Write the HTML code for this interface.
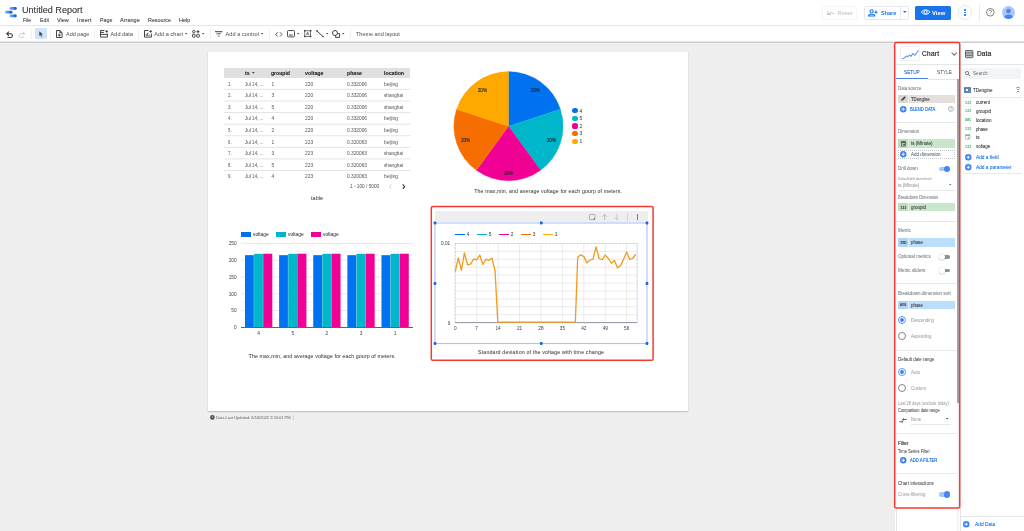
<!DOCTYPE html>
<html>
<head>
<meta charset="utf-8">
<title>Untitled Report</title>
<style>
*{box-sizing:border-box;margin:0;padding:0}
html,body{width:1024px;height:531px;overflow:hidden;background:#eeeeee;font-family:"Liberation Sans",sans-serif;color:#3c4043}
.a{position:absolute}
.t{position:absolute;white-space:nowrap;transform-origin:0 0;text-shadow:0 0 0.5px color-mix(in srgb,currentColor 45%,transparent)}
svg{position:absolute;overflow:visible}
#root{position:absolute;left:0;top:0;width:1024px;height:531px;will-change:transform}
</style>
</head>
<body>
<div id="root">
<div class="a" style="left:0.00px;top:0.00px;width:1024.00px;height:25.40px;background:#fff;"></div>
<div class="a" style="left:0.00px;top:25.40px;width:1024.00px;height:0.70px;background:#e4e6e8;"></div>
<div class="a" style="left:0.00px;top:26.10px;width:1024.00px;height:16.00px;background:#fff;"></div>
<div class="a" style="left:0.00px;top:41.00px;width:1024.00px;height:2.40px;background:linear-gradient(#ffffff 0%,#dedede 30%,#c3c3c3 55%,#cfcfcf 75%,#eeeeee 100%)"></div>
<svg style="left:5.40px;top:7.40px" width="12" height="10.6" viewBox="0 0 12 10.6"><defs><linearGradient id="lg" x1="0" x2="1" y1="0" y2="0"><stop offset="0" stop-color="#7fb0f9"/><stop offset="0.55" stop-color="#4285f4"/><stop offset="1" stop-color="#1967d2"/></linearGradient></defs><rect x="4.5" y="0.1" width="7.1" height="2.75" rx="1.37" fill="url(#lg)"/><rect x="0.1" y="3.85" width="7.3" height="2.75" rx="1.37" fill="url(#lg)"/><rect x="4.5" y="7.6" width="7.1" height="2.75" rx="1.37" fill="url(#lg)"/><circle cx="10.2" cy="1.47" r="1.37" fill="#1a6ae0"/><circle cx="6" cy="5.22" r="1.37" fill="#1a6ae0"/><circle cx="10.2" cy="8.97" r="1.37" fill="#1a6ae0"/></svg>
<div class="t" style="left:22.40px;top:4px;font-size:9.40px;color:#3c4043;line-height:11px;transform:scaleX(0.9697);">Untitled Report</div>
<div class="t" style="left:23.10px;top:17px;font-size:5.60px;color:#45494d;line-height:6px;transform:scaleX(0.8977);">File</div>
<div class="t" style="left:39.80px;top:17px;font-size:5.60px;color:#45494d;line-height:6px;transform:scaleX(0.9327);">Edit</div>
<div class="t" style="left:57.00px;top:17px;font-size:5.60px;color:#45494d;line-height:6px;transform:scaleX(0.9803);">View</div>
<div class="t" style="left:77.00px;top:17px;font-size:5.60px;color:#45494d;line-height:6px;letter-spacing:0.082px;">Insert</div>
<div class="t" style="left:99.60px;top:17px;font-size:5.60px;color:#45494d;line-height:6px;transform:scaleX(0.9481);">Page</div>
<div class="t" style="left:120.20px;top:17px;font-size:5.60px;color:#45494d;line-height:6px;transform:scaleX(0.9938);">Arrange</div>
<div class="t" style="left:148.00px;top:17px;font-size:5.60px;color:#45494d;line-height:6px;transform:scaleX(0.9597);">Resource</div>
<div class="t" style="left:179.00px;top:17px;font-size:5.60px;color:#45494d;line-height:6px;transform:scaleX(0.9811);">Help</div>
<div class="a" style="left:822.00px;top:5.50px;width:35.00px;height:14.00px;background:#fff;border:0.5px solid #f4f5f6;border-radius:1.6px"></div>
<svg style="left:827.00px;top:9.50px" width="8" height="6" viewBox="0 0 8 6"><path d="M0.8 1.2 V4.6 H4 M1 4.4 C2.2 2.6 5 2 7.6 4.2" fill="none" stroke="#bcbfc3" stroke-width="1.0"/></svg>
<div class="t" style="left:837.60px;top:10px;font-size:5.60px;color:#c4c7ca;line-height:6px;letter-spacing:0.074px;">Reset</div>
<div class="a" style="left:863.50px;top:5.50px;width:45.00px;height:14.00px;background:#fff;border:0.6px solid #e6e8eb;border-radius:1.6px"></div>
<div class="a" style="left:899.80px;top:5.80px;width:0.60px;height:13.40px;background:#e6e8eb;"></div>
<svg style="left:868.00px;top:8.60px" width="10" height="8" viewBox="0 0 10 8"><g fill="none" stroke="#1a73e8" stroke-width="1.05"><circle cx="3.6" cy="2.3" r="1.6"/><path d="M0.5 7 C0.5 4.6 6.7 4.6 6.7 7 Z"/><path d="M8 1.6 V4.8 M6.4 3.2 H9.6"/></g></svg>
<div class="t" style="left:881.00px;top:10px;font-size:5.60px;color:#1a73e8;line-height:6px;transform:scaleX(0.9766);font-weight:bold;text-shadow:none;">Share</div>
<svg style="left:902.60px;top:11.40px" width="3.6" height="2" viewBox="0 0 3.6 2"><path d="M0 0 H3.6 L1.8 2 Z" fill="#1a73e8"/></svg>
<div class="a" style="left:915.00px;top:5.50px;width:36.00px;height:14.00px;background:#1a73e8;border-radius:1.6px"></div>
<svg style="left:921.00px;top:9.40px" width="9.2" height="6.2" viewBox="0 0 9.2 6.2"><g fill="none" stroke="#fff" stroke-width="0.95"><path d="M0.4 3.1 C2 0.2 7.2 0.2 8.8 3.1 C7.2 6 2 6 0.4 3.1 Z"/><circle cx="4.6" cy="3.1" r="1.6"/></g></svg>
<div class="t" style="left:932.00px;top:10px;font-size:5.80px;color:#fff;line-height:6px;letter-spacing:0.022px;font-weight:bold;text-shadow:none;">View</div>
<div class="a" style="left:957.60px;top:5.20px;width:14.80px;height:14.80px;background:#fff;border:0.6px solid #e6e8eb;border-radius:50%"></div>
<div class="a" style="left:964.30px;top:9.15px;width:1.50px;height:1.50px;background:#1a73e8;border-radius:50%"></div>
<div class="a" style="left:964.30px;top:11.75px;width:1.50px;height:1.50px;background:#1a73e8;border-radius:50%"></div>
<div class="a" style="left:964.30px;top:14.35px;width:1.50px;height:1.50px;background:#1a73e8;border-radius:50%"></div>
<div class="a" style="left:979.30px;top:4.00px;width:0.60px;height:17.20px;background:#e9ebed;"></div>
<svg style="left:986.20px;top:8.20px" width="8.6" height="8.6" viewBox="0 0 8.6 8.6"><circle cx="4.3" cy="4.3" r="3.8" fill="none" stroke="#5f6368" stroke-width="0.8"/><path d="M3.1 3.4 C3.1 1.7 5.6 1.7 5.6 3.4 C5.6 4.3 4.3 4.4 4.3 5.3" fill="none" stroke="#5f6368" stroke-width="0.75"/><circle cx="4.3" cy="6.4" r="0.45" fill="#5f6368"/></svg>
<svg style="left:1001.50px;top:6.00px" width="13" height="13" viewBox="0 0 13 13"><defs><clipPath id="av"><circle cx="6.5" cy="6.5" r="6.5"/></clipPath></defs><circle cx="6.5" cy="6.5" r="6.5" fill="#a8c7fa"/><g clip-path="url(#av)" fill="#4a86e8"><circle cx="6.5" cy="5" r="2.3"/><path d="M2 11.3 C2 7.6 11 7.6 11 11.3 V13 H2 Z"/></g></svg>
<svg style="left:6.00px;top:30.60px" width="7.5" height="7" viewBox="0 0 7.5 7"><path d="M2.9 0.6 L0.8 2.7 L2.9 4.8 M1 2.7 H4.6 A1.85 1.85 0 0 1 4.6 6.4 H1.4" fill="none" stroke="#33373b" stroke-width="1.05"/></svg>
<svg style="left:18.20px;top:30.60px" width="7.5" height="7" viewBox="0 0 7.5 7"><path d="M4.6 0.6 L6.7 2.7 L4.6 4.8 M6.5 2.7 H2.9 A1.85 1.85 0 0 0 2.9 6.4 H6.1" fill="none" stroke="#c4c7ca" stroke-width="0.85"/></svg>
<div class="a" style="left:31.20px;top:29.20px;width:0.50px;height:9.80px;background:#eff0f2;"></div>
<div class="a" style="left:34.80px;top:27.80px;width:12.20px;height:11.40px;background:#d2e3fc;border-radius:1px"></div>
<svg style="left:39.00px;top:31.00px" width="4.4" height="6" viewBox="0 0 4.4 6"><path d="M0.3 0.2 V5 L1.5 3.9 L2.4 5.9 L3.2 5.5 L2.3 3.6 H3.9 Z" fill="#3c4043"/></svg>
<div class="a" style="left:50.20px;top:29.20px;width:0.50px;height:9.80px;background:#eff0f2;"></div>
<svg style="left:56.00px;top:30.00px" width="6.6" height="8" viewBox="0 0 6.6 8"><path d="M0.5 0.5 H4 L6.1 2.6 V7.5 H0.5 Z M3.9 0.6 V2.7 H6" fill="none" stroke="#3c4043" stroke-width="0.98"/><path d="M3.3 3.6 V6.6 M1.8 5.1 H4.8" stroke="#3c4043" stroke-width="0.98"/></svg>
<div class="t" style="left:65.90px;top:31px;font-size:5.50px;color:#6a6e73;line-height:6px;transform:scaleX(0.9894);">Add page</div>
<div class="a" style="left:94.40px;top:29.20px;width:0.50px;height:9.80px;background:#eff0f2;"></div>
<svg style="left:100.00px;top:30.20px" width="8.2" height="7.6" viewBox="0 0 8.2 7.6"><path d="M4.4 0.5 H0.5 V7.1 H7.4 V3.6 M0.5 4.4 H7.4 M0.5 2.4 H4" fill="none" stroke="#3c4043" stroke-width="0.98"/><path d="M6.7 0 V2.8 M5.3 1.4 H8.1" stroke="#3c4043" stroke-width="0.9"/></svg>
<div class="t" style="left:110.60px;top:31px;font-size:5.50px;color:#6a6e73;line-height:6px;letter-spacing:0.048px;">Add data</div>
<div class="a" style="left:138.40px;top:29.20px;width:0.50px;height:9.80px;background:#eff0f2;"></div>
<svg style="left:144.00px;top:30.20px" width="8.2" height="7.6" viewBox="0 0 8.2 7.6"><path d="M4.4 0.5 H0.5 V7.1 H7.4 V3.6" fill="none" stroke="#3c4043" stroke-width="0.98"/><path d="M2.2 5.8 V4.2 M3.7 5.8 V2.8 M5.2 5.8 V4.8" stroke="#3c4043" stroke-width="0.98"/><path d="M6.7 0 V2.8 M5.3 1.4 H8.1" stroke="#3c4043" stroke-width="0.9"/></svg>
<div class="t" style="left:154.20px;top:31px;font-size:5.50px;color:#6a6e73;line-height:6px;letter-spacing:0.061px;">Add a chart</div>
<svg style="left:185.00px;top:33.40px" width="2.4" height="1.4" viewBox="0 0 2.4 1.4"><path d="M0 0 H2.4 L1.2 1.4 Z" fill="#3c4043"/></svg>
<svg style="left:192.20px;top:30.20px" width="8" height="7.6" viewBox="0 0 8 7.6"><g fill="none" stroke="#3c4043" stroke-width="0.98"><circle cx="1.8" cy="1.7" r="1.25"/><rect x="0.5" y="4.4" width="2.6" height="2.8" rx="0.6"/><rect x="4.7" y="4.4" width="2.6" height="2.8" rx="0.6"/><path d="M6 0.2 V3.2 M4.5 1.7 H7.5"/></g></svg>
<svg style="left:202.00px;top:33.40px" width="2.4" height="1.4" viewBox="0 0 2.4 1.4"><path d="M0 0 H2.4 L1.2 1.4 Z" fill="#3c4043"/></svg>
<div class="a" style="left:210.00px;top:29.20px;width:0.50px;height:9.80px;background:#eff0f2;"></div>
<svg style="left:215.40px;top:31.00px" width="7.4" height="5.8" viewBox="0 0 7.4 5.8"><path d="M0 0.6 H7.4 M1.4 2.8 H6 M2.8 5 H4.6" stroke="#5f6368" stroke-width="1.15"/></svg>
<div class="t" style="left:225.60px;top:31px;font-size:5.50px;color:#6a6e73;line-height:6px;letter-spacing:0.076px;">Add a control</div>
<svg style="left:261.40px;top:33.40px" width="2.4" height="1.4" viewBox="0 0 2.4 1.4"><path d="M0 0 H2.4 L1.2 1.4 Z" fill="#3c4043"/></svg>
<div class="a" style="left:269.00px;top:29.20px;width:0.50px;height:9.80px;background:#eff0f2;"></div>
<svg style="left:275.00px;top:31.60px" width="7.6" height="4.8" viewBox="0 0 7.6 4.8"><path d="M2.6 0.3 L0.6 2.4 L2.6 4.5 M5 0.3 L7 2.4 L5 4.5" fill="none" stroke="#3c4043" stroke-width="0.9"/></svg>
<svg style="left:287.00px;top:30.30px" width="8" height="7.4" viewBox="0 0 8 7.4"><rect x="0.5" y="0.5" width="7" height="6.4" rx="1" fill="none" stroke="#3c4043" stroke-width="0.9"/><path d="M1.6 5.6 L3.1 3.9 L4.1 5 L5 4.2 L6.4 5.6 Z" fill="#3c4043"/></svg>
<svg style="left:297.00px;top:33.40px" width="2.4" height="1.4" viewBox="0 0 2.4 1.4"><path d="M0 0 H2.4 L1.2 1.4 Z" fill="#3c4043"/></svg>
<svg style="left:304.00px;top:30.40px" width="7.4" height="7.2" viewBox="0 0 7.4 7.2"><rect x="0.8" y="0.8" width="5.8" height="5.6" fill="none" stroke="#3c4043" stroke-width="0.7"/><path d="M2.4 5.2 L3.7 2 L5 5.2 M2.9 4.2 H4.5" fill="none" stroke="#3c4043" stroke-width="0.6"/><g fill="#3c4043"><rect x="0" y="0" width="1.5" height="1.5"/><rect x="5.9" y="0" width="1.5" height="1.5"/><rect x="0" y="5.7" width="1.5" height="1.5"/><rect x="5.9" y="5.7" width="1.5" height="1.5"/></g></svg>
<svg style="left:316.00px;top:30.40px" width="8" height="7.4" viewBox="0 0 8 7.4"><path d="M0.8 0.8 L7 6.6" stroke="#3c4043" stroke-width="1"/><circle cx="0.9" cy="0.9" r="0.8" fill="#3c4043"/><circle cx="7" cy="6.6" r="0.8" fill="#3c4043"/></svg>
<svg style="left:326.00px;top:33.40px" width="2.4" height="1.4" viewBox="0 0 2.4 1.4"><path d="M0 0 H2.4 L1.2 1.4 Z" fill="#3c4043"/></svg>
<svg style="left:332.00px;top:30.20px" width="8.4" height="8" viewBox="0 0 8.4 8"><circle cx="3" cy="3" r="2.5" fill="none" stroke="#3c4043" stroke-width="0.98"/><path d="M3.6 5.6 V7.4 H7.6 V3.6 H5.6" fill="none" stroke="#3c4043" stroke-width="0.98"/></svg>
<svg style="left:342.00px;top:33.40px" width="2.4" height="1.4" viewBox="0 0 2.4 1.4"><path d="M0 0 H2.4 L1.2 1.4 Z" fill="#3c4043"/></svg>
<div class="a" style="left:350.00px;top:29.20px;width:0.50px;height:9.80px;background:#eff0f2;"></div>
<div class="t" style="left:356.20px;top:31px;font-size:5.50px;color:#6a6e73;line-height:6px;transform:scaleX(0.9948);">Theme and layout</div>
<div class="a" style="left:207.60px;top:51.50px;width:480.60px;height:359.60px;background:#fff;box-shadow:0 0.9px 1.1px rgba(0,0,0,.2),0 0 0.7px rgba(0,0,0,.18)"></div>
<div class="a" style="left:224.10px;top:68.10px;width:186.30px;height:9.65px;background:#e0e0e0;"></div>
<div class="t" style="left:244.50px;top:70px;font-size:5.70px;color:#2b2b2b;line-height:6px;transform:scaleX(0.9273);font-weight:bold;">ts</div>
<svg style="left:252.30px;top:72.10px" width="2.6" height="1.7" viewBox="0 0 2.6 1.7"><path d="M0 0 H2.6 L1.3 1.7 Z" fill="#333"/></svg>
<div class="t" style="left:271.20px;top:70px;font-size:5.70px;color:#2b2b2b;line-height:6px;transform:scaleX(0.8958);font-weight:bold;">groupid</div>
<div class="t" style="left:304.60px;top:70px;font-size:5.70px;color:#2b2b2b;line-height:6px;transform:scaleX(0.9321);font-weight:bold;">voltage</div>
<div class="t" style="left:346.60px;top:70px;font-size:5.70px;color:#2b2b2b;line-height:6px;transform:scaleX(0.9105);font-weight:bold;">phase</div>
<div class="t" style="left:384.10px;top:70px;font-size:5.70px;color:#2b2b2b;line-height:6px;transform:scaleX(0.9199);font-weight:bold;">location</div>
<svg style="left:0.00px;top:0.00px" width="1024" height="531" viewBox="0 0 1024 531"><path d="M224.1 89.35 H410.4" stroke="#d6d6d6" stroke-width="0.65"/></svg>
<div class="t" style="left:227.60px;top:82px;font-size:4.90px;color:#747474;line-height:5px;transform:scaleX(0.8809);">1.</div>
<div class="t" style="left:244.60px;top:82px;font-size:4.90px;color:#747474;line-height:5px;transform:scaleX(0.9355);">Jul 14, ...</div>
<div class="t" style="left:271.60px;top:82px;font-size:4.90px;color:#747474;line-height:5px;">1</div>
<div class="t" style="left:304.60px;top:82px;font-size:4.90px;color:#747474;line-height:5px;transform:scaleX(0.9908);">220</div>
<div class="t" style="left:346.60px;top:82px;font-size:4.90px;color:#747474;line-height:5px;transform:scaleX(0.9786);">0.332006</div>
<div class="t" style="left:384.10px;top:82px;font-size:4.90px;color:#747474;line-height:5px;transform:scaleX(0.9953);">beijing</div>
<svg style="left:0.00px;top:0.00px" width="1024" height="531" viewBox="0 0 1024 531"><path d="M224.1 100.95 H410.4" stroke="#d6d6d6" stroke-width="0.65"/></svg>
<div class="t" style="left:227.60px;top:93px;font-size:4.90px;color:#747474;line-height:5px;transform:scaleX(0.8809);">2.</div>
<div class="t" style="left:244.60px;top:93px;font-size:4.90px;color:#747474;line-height:5px;transform:scaleX(0.9355);">Jul 14, ...</div>
<div class="t" style="left:271.60px;top:93px;font-size:4.90px;color:#747474;line-height:5px;">3</div>
<div class="t" style="left:304.60px;top:93px;font-size:4.90px;color:#747474;line-height:5px;transform:scaleX(0.9908);">220</div>
<div class="t" style="left:346.60px;top:93px;font-size:4.90px;color:#747474;line-height:5px;transform:scaleX(0.9786);">0.332006</div>
<div class="t" style="left:384.10px;top:93px;font-size:4.90px;color:#747474;line-height:5px;transform:scaleX(0.9603);">shanghai</div>
<svg style="left:0.00px;top:0.00px" width="1024" height="531" viewBox="0 0 1024 531"><path d="M224.1 112.55 H410.4" stroke="#d6d6d6" stroke-width="0.65"/></svg>
<div class="t" style="left:227.60px;top:105px;font-size:4.90px;color:#747474;line-height:5px;transform:scaleX(0.8809);">3.</div>
<div class="t" style="left:244.60px;top:105px;font-size:4.90px;color:#747474;line-height:5px;transform:scaleX(0.9355);">Jul 14, ...</div>
<div class="t" style="left:271.60px;top:105px;font-size:4.90px;color:#747474;line-height:5px;">5</div>
<div class="t" style="left:304.60px;top:105px;font-size:4.90px;color:#747474;line-height:5px;transform:scaleX(0.9908);">220</div>
<div class="t" style="left:346.60px;top:105px;font-size:4.90px;color:#747474;line-height:5px;transform:scaleX(0.9786);">0.332006</div>
<div class="t" style="left:384.10px;top:105px;font-size:4.90px;color:#747474;line-height:5px;transform:scaleX(0.9603);">shanghai</div>
<svg style="left:0.00px;top:0.00px" width="1024" height="531" viewBox="0 0 1024 531"><path d="M224.1 124.15 H410.4" stroke="#d6d6d6" stroke-width="0.65"/></svg>
<div class="t" style="left:227.60px;top:116px;font-size:4.90px;color:#747474;line-height:5px;transform:scaleX(0.8809);">4.</div>
<div class="t" style="left:244.60px;top:116px;font-size:4.90px;color:#747474;line-height:5px;transform:scaleX(0.9355);">Jul 14, ...</div>
<div class="t" style="left:271.60px;top:116px;font-size:4.90px;color:#747474;line-height:5px;">4</div>
<div class="t" style="left:304.60px;top:116px;font-size:4.90px;color:#747474;line-height:5px;transform:scaleX(0.9908);">220</div>
<div class="t" style="left:346.60px;top:116px;font-size:4.90px;color:#747474;line-height:5px;transform:scaleX(0.9786);">0.332006</div>
<div class="t" style="left:384.10px;top:116px;font-size:4.90px;color:#747474;line-height:5px;transform:scaleX(0.9953);">beijing</div>
<svg style="left:0.00px;top:0.00px" width="1024" height="531" viewBox="0 0 1024 531"><path d="M224.1 135.75 H410.4" stroke="#d6d6d6" stroke-width="0.65"/></svg>
<div class="t" style="left:227.60px;top:128px;font-size:4.90px;color:#747474;line-height:5px;transform:scaleX(0.8809);">5.</div>
<div class="t" style="left:244.60px;top:128px;font-size:4.90px;color:#747474;line-height:5px;transform:scaleX(0.9355);">Jul 14, ...</div>
<div class="t" style="left:271.60px;top:128px;font-size:4.90px;color:#747474;line-height:5px;">2</div>
<div class="t" style="left:304.60px;top:128px;font-size:4.90px;color:#747474;line-height:5px;transform:scaleX(0.9908);">220</div>
<div class="t" style="left:346.60px;top:128px;font-size:4.90px;color:#747474;line-height:5px;transform:scaleX(0.9786);">0.332006</div>
<div class="t" style="left:384.10px;top:128px;font-size:4.90px;color:#747474;line-height:5px;transform:scaleX(0.9953);">beijing</div>
<svg style="left:0.00px;top:0.00px" width="1024" height="531" viewBox="0 0 1024 531"><path d="M224.1 147.35 H410.4" stroke="#d6d6d6" stroke-width="0.65"/></svg>
<div class="t" style="left:227.60px;top:140px;font-size:4.90px;color:#747474;line-height:5px;transform:scaleX(0.8809);">6.</div>
<div class="t" style="left:244.60px;top:140px;font-size:4.90px;color:#747474;line-height:5px;transform:scaleX(0.9355);">Jul 14, ...</div>
<div class="t" style="left:271.60px;top:140px;font-size:4.90px;color:#747474;line-height:5px;">1</div>
<div class="t" style="left:304.60px;top:140px;font-size:4.90px;color:#747474;line-height:5px;transform:scaleX(0.9908);">223</div>
<div class="t" style="left:346.60px;top:140px;font-size:4.90px;color:#747474;line-height:5px;transform:scaleX(0.9786);">0.320063</div>
<div class="t" style="left:384.10px;top:140px;font-size:4.90px;color:#747474;line-height:5px;transform:scaleX(0.9953);">beijing</div>
<svg style="left:0.00px;top:0.00px" width="1024" height="531" viewBox="0 0 1024 531"><path d="M224.1 158.95 H410.4" stroke="#d6d6d6" stroke-width="0.65"/></svg>
<div class="t" style="left:227.60px;top:151px;font-size:4.90px;color:#747474;line-height:5px;transform:scaleX(0.8809);">7.</div>
<div class="t" style="left:244.60px;top:151px;font-size:4.90px;color:#747474;line-height:5px;transform:scaleX(0.9355);">Jul 14, ...</div>
<div class="t" style="left:271.60px;top:151px;font-size:4.90px;color:#747474;line-height:5px;">3</div>
<div class="t" style="left:304.60px;top:151px;font-size:4.90px;color:#747474;line-height:5px;transform:scaleX(0.9908);">223</div>
<div class="t" style="left:346.60px;top:151px;font-size:4.90px;color:#747474;line-height:5px;transform:scaleX(0.9786);">0.320063</div>
<div class="t" style="left:384.10px;top:151px;font-size:4.90px;color:#747474;line-height:5px;transform:scaleX(0.9603);">shanghai</div>
<svg style="left:0.00px;top:0.00px" width="1024" height="531" viewBox="0 0 1024 531"><path d="M224.1 170.55 H410.4" stroke="#d6d6d6" stroke-width="0.65"/></svg>
<div class="t" style="left:227.60px;top:163px;font-size:4.90px;color:#747474;line-height:5px;transform:scaleX(0.8809);">8.</div>
<div class="t" style="left:244.60px;top:163px;font-size:4.90px;color:#747474;line-height:5px;transform:scaleX(0.9355);">Jul 14, ...</div>
<div class="t" style="left:271.60px;top:163px;font-size:4.90px;color:#747474;line-height:5px;">5</div>
<div class="t" style="left:304.60px;top:163px;font-size:4.90px;color:#747474;line-height:5px;transform:scaleX(0.9908);">223</div>
<div class="t" style="left:346.60px;top:163px;font-size:4.90px;color:#747474;line-height:5px;transform:scaleX(0.9786);">0.320063</div>
<div class="t" style="left:384.10px;top:163px;font-size:4.90px;color:#747474;line-height:5px;transform:scaleX(0.9603);">shanghai</div>
<div class="t" style="left:227.60px;top:174px;font-size:4.90px;color:#747474;line-height:5px;transform:scaleX(0.8809);">9.</div>
<div class="t" style="left:244.60px;top:174px;font-size:4.90px;color:#747474;line-height:5px;transform:scaleX(0.9355);">Jul 14, ...</div>
<div class="t" style="left:271.60px;top:174px;font-size:4.90px;color:#747474;line-height:5px;">4</div>
<div class="t" style="left:304.60px;top:174px;font-size:4.90px;color:#747474;line-height:5px;transform:scaleX(0.9908);">223</div>
<div class="t" style="left:346.60px;top:174px;font-size:4.90px;color:#747474;line-height:5px;transform:scaleX(0.9786);">0.320063</div>
<div class="t" style="left:384.10px;top:174px;font-size:4.90px;color:#747474;line-height:5px;transform:scaleX(0.9953);">beijing</div>
<div class="t" style="left:349.50px;top:184px;font-size:4.90px;color:#707070;line-height:5px;transform:scaleX(0.9689);">1 - 100 / 5000</div>
<svg style="left:388.60px;top:183.60px" width="3" height="5.4" viewBox="0 0 3 5.4"><path d="M2.4 0.4 L0.6 2.7 L2.4 5" fill="none" stroke="#c2c2c2" stroke-width="0.8"/></svg>
<svg style="left:401.80px;top:183.60px" width="3.4" height="5.4" viewBox="0 0 3.4 5.4"><path d="M0.7 0.4 L2.7 2.7 L0.7 5" fill="none" stroke="#333" stroke-width="1.1"/></svg>
<div class="t" style="left:311.00px;top:195px;font-size:5.40px;color:#555;line-height:6px;letter-spacing:0.098px;">table</div>
<svg style="left:0;top:0" width="1024" height="531" viewBox="0 0 1024 531"><path d="M508.5 126.2 L508.50 71.60 A54.6 54.6 0 0 1 560.43 109.33 Z" fill="#0072f0" stroke="#0072f0" stroke-width="0.35"/><path d="M508.5 126.2 L560.43 109.33 A54.6 54.6 0 0 1 540.59 170.37 Z" fill="#00b6cb" stroke="#00b6cb" stroke-width="0.35"/><path d="M508.5 126.2 L540.59 170.37 A54.6 54.6 0 0 1 476.41 170.37 Z" fill="#f10096" stroke="#f10096" stroke-width="0.35"/><path d="M508.5 126.2 L476.41 170.37 A54.6 54.6 0 0 1 456.57 109.33 Z" fill="#f66d00" stroke="#f66d00" stroke-width="0.35"/><path d="M508.5 126.2 L456.57 109.33 A54.6 54.6 0 0 1 508.50 71.60 Z" fill="#ffa800" stroke="#ffa800" stroke-width="0.35"/></svg>
<div class="t" style="left:530.60px;top:88px;font-size:4.70px;color:#1f1f1f;line-height:5px;">20%</div>
<div class="t" style="left:546.70px;top:138px;font-size:4.70px;color:#1f1f1f;line-height:5px;">20%</div>
<div class="t" style="left:503.90px;top:171px;font-size:4.70px;color:#1f1f1f;line-height:5px;">20%</div>
<div class="t" style="left:460.90px;top:138px;font-size:4.70px;color:#1f1f1f;line-height:5px;">20%</div>
<div class="t" style="left:477.70px;top:88px;font-size:4.70px;color:#1f1f1f;line-height:5px;">20%</div>
<div class="a" style="left:572.40px;top:108.30px;width:5.20px;height:5.20px;background:#0072f0;border-radius:50%"></div>
<div class="t" style="left:579.40px;top:109px;font-size:4.90px;color:#555;line-height:5px;">4</div>
<div class="a" style="left:572.40px;top:115.88px;width:5.20px;height:5.20px;background:#00b6cb;border-radius:50%"></div>
<div class="t" style="left:579.40px;top:116px;font-size:4.90px;color:#555;line-height:5px;">5</div>
<div class="a" style="left:572.40px;top:123.46px;width:5.20px;height:5.20px;background:#f10096;border-radius:50%"></div>
<div class="t" style="left:579.40px;top:124px;font-size:4.90px;color:#555;line-height:5px;">2</div>
<div class="a" style="left:572.40px;top:131.04px;width:5.20px;height:5.20px;background:#f66d00;border-radius:50%"></div>
<div class="t" style="left:579.40px;top:131px;font-size:4.90px;color:#555;line-height:5px;">3</div>
<div class="a" style="left:572.40px;top:138.62px;width:5.20px;height:5.20px;background:#ffa800;border-radius:50%"></div>
<div class="t" style="left:579.40px;top:139px;font-size:4.90px;color:#555;line-height:5px;">1</div>
<div class="t" style="left:474.20px;top:188px;font-size:5.30px;color:#555;line-height:6px;letter-spacing:0.098px;">The max,min, and average voltage for each gourp of meters.</div>
<svg style="left:0;top:0" width="1024" height="531"><path d="M241 319.00 H412.5" stroke="#ebebeb" stroke-width="0.6"/><path d="M241 310.60 H412.5" stroke="#d9d9d9" stroke-width="0.6"/><path d="M241 302.20 H412.5" stroke="#ebebeb" stroke-width="0.6"/><path d="M241 293.80 H412.5" stroke="#d9d9d9" stroke-width="0.6"/><path d="M241 285.40 H412.5" stroke="#ebebeb" stroke-width="0.6"/><path d="M241 277.00 H412.5" stroke="#d9d9d9" stroke-width="0.6"/><path d="M241 268.60 H412.5" stroke="#ebebeb" stroke-width="0.6"/><path d="M241 260.20 H412.5" stroke="#d9d9d9" stroke-width="0.6"/><path d="M241 251.80 H412.5" stroke="#ebebeb" stroke-width="0.6"/><path d="M241 243.40 H412.5" stroke="#d9d9d9" stroke-width="0.6"/></svg>
<div class="t" style="left:233.99px;top:325px;font-size:4.70px;color:#5f6368;line-height:5px;">0</div>
<div class="t" style="left:231.37px;top:308px;font-size:4.70px;color:#5f6368;line-height:5px;">50</div>
<div class="t" style="left:228.76px;top:292px;font-size:4.70px;color:#5f6368;line-height:5px;">100</div>
<div class="t" style="left:228.76px;top:275px;font-size:4.70px;color:#5f6368;line-height:5px;">150</div>
<div class="t" style="left:228.76px;top:258px;font-size:4.70px;color:#5f6368;line-height:5px;">200</div>
<div class="t" style="left:228.76px;top:241px;font-size:4.70px;color:#5f6368;line-height:5px;">250</div>
<svg style="left:0;top:0" width="1024" height="531"><rect x="245.00" y="255.16" width="8.80" height="72.24" fill="#0072f0"/><rect x="253.80" y="255.16" width="0.3" height="72.24" fill="#0072f0" opacity="0.45"/><rect x="254.10" y="253.82" width="8.80" height="73.58" fill="#00b6cb"/><rect x="262.90" y="253.82" width="0.3" height="73.58" fill="#00b6cb" opacity="0.45"/><rect x="263.20" y="253.72" width="9.10" height="73.68" fill="#f10096"/><rect x="279.12" y="255.16" width="8.80" height="72.24" fill="#0072f0"/><rect x="287.92" y="255.16" width="0.3" height="72.24" fill="#0072f0" opacity="0.45"/><rect x="288.22" y="253.82" width="8.80" height="73.58" fill="#00b6cb"/><rect x="297.02" y="253.82" width="0.3" height="73.58" fill="#00b6cb" opacity="0.45"/><rect x="297.32" y="253.72" width="9.10" height="73.68" fill="#f10096"/><rect x="313.24" y="255.16" width="8.80" height="72.24" fill="#0072f0"/><rect x="322.04" y="255.16" width="0.3" height="72.24" fill="#0072f0" opacity="0.45"/><rect x="322.34" y="253.82" width="8.80" height="73.58" fill="#00b6cb"/><rect x="331.14" y="253.82" width="0.3" height="73.58" fill="#00b6cb" opacity="0.45"/><rect x="331.44" y="253.72" width="9.10" height="73.68" fill="#f10096"/><rect x="347.36" y="255.16" width="8.80" height="72.24" fill="#0072f0"/><rect x="356.16" y="255.16" width="0.3" height="72.24" fill="#0072f0" opacity="0.45"/><rect x="356.46" y="253.82" width="8.80" height="73.58" fill="#00b6cb"/><rect x="365.26" y="253.82" width="0.3" height="73.58" fill="#00b6cb" opacity="0.45"/><rect x="365.56" y="253.72" width="9.10" height="73.68" fill="#f10096"/><rect x="381.48" y="255.16" width="8.80" height="72.24" fill="#0072f0"/><rect x="390.28" y="255.16" width="0.3" height="72.24" fill="#0072f0" opacity="0.45"/><rect x="390.58" y="253.82" width="8.80" height="73.58" fill="#00b6cb"/><rect x="399.38" y="253.82" width="0.3" height="73.58" fill="#00b6cb" opacity="0.45"/><rect x="399.68" y="253.72" width="9.10" height="73.68" fill="#f10096"/></svg>
<div class="a" style="left:241.00px;top:327.20px;width:171.50px;height:0.70px;background:#5f6368;"></div>
<div class="t" style="left:257.27px;top:331px;font-size:4.80px;color:#5f6368;line-height:5px;">4</div>
<div class="t" style="left:291.39px;top:331px;font-size:4.80px;color:#5f6368;line-height:5px;">5</div>
<div class="t" style="left:325.51px;top:331px;font-size:4.80px;color:#5f6368;line-height:5px;">2</div>
<div class="t" style="left:359.63px;top:331px;font-size:4.80px;color:#5f6368;line-height:5px;">3</div>
<div class="t" style="left:393.75px;top:331px;font-size:4.80px;color:#5f6368;line-height:5px;">1</div>
<div class="a" style="left:241.00px;top:232.00px;width:10.00px;height:5.00px;background:#0072f0;"></div>
<div class="t" style="left:253.20px;top:231px;font-size:5.10px;color:#505050;line-height:6px;transform:scaleX(0.9486);">voltage</div>
<div class="a" style="left:276.00px;top:232.00px;width:10.00px;height:5.00px;background:#00b6cb;"></div>
<div class="t" style="left:287.70px;top:231px;font-size:5.10px;color:#505050;line-height:6px;transform:scaleX(0.9486);">voltage</div>
<div class="a" style="left:310.60px;top:232.00px;width:10.00px;height:5.00px;background:#f10096;"></div>
<div class="t" style="left:322.60px;top:231px;font-size:5.10px;color:#505050;line-height:6px;transform:scaleX(0.9486);">voltage</div>
<div class="t" style="left:248.60px;top:353px;font-size:5.30px;color:#555;line-height:6px;letter-spacing:0.085px;">The max,min, and average voltage for each gourp of meters.</div>
<svg style="left:210.20px;top:414.80px" width="4.8" height="4.8" viewBox="0 0 4.8 4.8"><circle cx="2.4" cy="2.4" r="2.3" fill="#4d5156"/><path d="M2.4 1.2 V2.5 L3.3 3" stroke="#fff" stroke-width="0.5" fill="none"/></svg>
<div class="t" style="left:216.20px;top:415px;font-size:4.00px;color:#7b7f84;line-height:5px;transform:scaleX(0.9941);">Data Last Updated: 6/16/2022 2:20:01 PM</div>
<div class="a" style="left:293.20px;top:415.40px;width:0.50px;height:4.20px;background:#d2d2d2;"></div>
<svg style="left:0;top:0" width="1024" height="531"><rect x="431.3" y="206.5" width="221.8" height="153.8" rx="1.6" fill="none" stroke="#f73a30" stroke-width="1.5"/></svg>
<div class="a" style="left:434.60px;top:211.20px;width:213.00px;height:11.20px;background:#eeeeee;"></div>
<svg style="left:589.00px;top:214.00px" width="6.6" height="6.2" viewBox="0 0 6.6 6.2"><rect x="0.4" y="0.4" width="5.6" height="5.2" rx="0.8" fill="none" stroke="#8d9196" stroke-width="0.7"/><path d="M6 3.6 V5.6 H4 Z" fill="#6b6f74"/></svg>
<svg style="left:602.00px;top:214.00px" width="5.4" height="6.2" viewBox="0 0 5.4 6.2"><path d="M2.7 6 V0.6 M0.5 2.8 L2.7 0.5 L4.9 2.8" fill="none" stroke="#a4a8ac" stroke-width="0.7"/></svg>
<svg style="left:613.60px;top:214.00px" width="5.4" height="6.2" viewBox="0 0 5.4 6.2"><path d="M2.7 0.2 V5.6 M0.5 3.4 L2.7 5.7 L4.9 3.4" fill="none" stroke="#b8bbbf" stroke-width="0.7"/></svg>
<div class="a" style="left:627.30px;top:213.20px;width:0.60px;height:7.40px;background:#d6d6d6;"></div>
<div class="a" style="left:636.90px;top:214.20px;width:1.40px;height:1.40px;background:#5f6368;border-radius:50%"></div>
<div class="a" style="left:636.90px;top:216.30px;width:1.40px;height:1.40px;background:#5f6368;border-radius:50%"></div>
<div class="a" style="left:636.90px;top:218.40px;width:1.40px;height:1.40px;background:#5f6368;border-radius:50%"></div>
<svg style="left:0;top:0" width="1024" height="531"><rect x="435" y="223" width="212" height="120.5" fill="none" stroke="#a9c8f7" stroke-width="1.15"/><rect x="433.60" y="221.60" width="2.8" height="2.8" rx="0.8" fill="#1a66e0"/><rect x="539.90" y="221.60" width="2.8" height="2.8" rx="0.8" fill="#1a66e0"/><rect x="645.60" y="221.60" width="2.8" height="2.8" rx="0.8" fill="#1a66e0"/><rect x="433.60" y="282.10" width="2.8" height="2.8" rx="0.8" fill="#1a66e0"/><rect x="645.60" y="282.10" width="2.8" height="2.8" rx="0.8" fill="#1a66e0"/><rect x="433.60" y="342.10" width="2.8" height="2.8" rx="0.8" fill="#1a66e0"/><rect x="539.90" y="342.10" width="2.8" height="2.8" rx="0.8" fill="#1a66e0"/><rect x="645.60" y="342.10" width="2.8" height="2.8" rx="0.8" fill="#1a66e0"/></svg>
<div class="a" style="left:455.00px;top:233.60px;width:10.00px;height:0.90px;background:#0072f0;"></div>
<div class="t" style="left:466.80px;top:232px;font-size:4.80px;color:#555;line-height:5px;">4</div>
<div class="a" style="left:477.00px;top:233.60px;width:10.00px;height:0.90px;background:#00b6cb;"></div>
<div class="t" style="left:488.80px;top:232px;font-size:4.80px;color:#555;line-height:5px;">5</div>
<div class="a" style="left:499.00px;top:233.60px;width:10.00px;height:0.90px;background:#f10096;"></div>
<div class="t" style="left:510.80px;top:232px;font-size:4.80px;color:#555;line-height:5px;">2</div>
<div class="a" style="left:521.00px;top:233.60px;width:10.00px;height:0.90px;background:#f66d00;"></div>
<div class="t" style="left:532.80px;top:232px;font-size:4.80px;color:#555;line-height:5px;">3</div>
<div class="a" style="left:543.00px;top:233.60px;width:10.00px;height:0.90px;background:#ffa800;"></div>
<div class="t" style="left:554.80px;top:232px;font-size:4.80px;color:#555;line-height:5px;">1</div>
<svg style="left:0;top:0" width="1024" height="531" viewBox="0 0 1024 531"><path d="M455.25 251.41 H637.2" stroke="#dedede" stroke-width="0.6"/><path d="M455.25 259.32 H637.2" stroke="#dedede" stroke-width="0.6"/><path d="M455.25 267.23 H637.2" stroke="#dedede" stroke-width="0.6"/><path d="M455.25 275.14 H637.2" stroke="#dedede" stroke-width="0.6"/><path d="M455.25 283.05 H637.2" stroke="#dedede" stroke-width="0.6"/><path d="M455.25 290.96 H637.2" stroke="#dedede" stroke-width="0.6"/><path d="M455.25 298.87 H637.2" stroke="#dedede" stroke-width="0.6"/><path d="M455.25 306.78 H637.2" stroke="#dedede" stroke-width="0.6"/><path d="M455.25 314.69 H637.2" stroke="#dedede" stroke-width="0.6"/><path d="M476.68 243.5 V322.6" stroke="#dedede" stroke-width="0.6"/><path d="M498.11 243.5 V322.6" stroke="#dedede" stroke-width="0.6"/><path d="M519.54 243.5 V322.6" stroke="#dedede" stroke-width="0.6"/><path d="M540.97 243.5 V322.6" stroke="#dedede" stroke-width="0.6"/><path d="M562.40 243.5 V322.6" stroke="#dedede" stroke-width="0.6"/><path d="M583.83 243.5 V322.6" stroke="#dedede" stroke-width="0.6"/><path d="M605.26 243.5 V322.6" stroke="#dedede" stroke-width="0.6"/><path d="M626.69 243.5 V322.6" stroke="#dedede" stroke-width="0.6"/><rect x="455.25" y="243.5" width="181.95000000000005" height="79.10000000000002" fill="none" stroke="#7ea8ee" stroke-width="0.7" stroke-dasharray="0.8 0.6"/><path d="M455.25 322.6 H637.2" stroke="#7a7a7a" stroke-width="0.7"/><path d="M455.25 271.60 L458.31 257.90 L461.37 270.40 L464.43 252.90 L467.50 264.75 L470.56 264.10 L473.62 259.10 L476.68 259.75 L479.74 255.00 L482.80 264.50 L485.87 259.40 L488.93 260.40 L491.99 258.10 L495.05 271.00 L497.81 322.20 L575.35 322.20 L577.71 257.25 L580.77 254.75 L583.83 256.60 L586.89 262.90 L589.96 260.00 L593.02 259.10 L596.08 247.00 L599.14 258.50 L602.20 259.75 L605.26 255.10 L608.33 258.50 L611.39 263.25 L614.45 260.40 L617.51 267.90 L620.57 265.60 L623.63 259.10 L626.69 252.00 L629.76 259.50 L632.82 258.25 L635.88 254.10" fill="none" stroke="#f29a1c" stroke-width="1.3" stroke-linejoin="round"/></svg>
<div class="t" style="left:441.00px;top:241px;font-size:4.70px;color:#5f6368;line-height:5px;letter-spacing:0.013px;">0.01</div>
<div class="t" style="left:447.80px;top:321px;font-size:4.70px;color:#5f6368;line-height:5px;">0</div>
<div class="t" style="left:453.94px;top:326px;font-size:4.70px;color:#5f6368;line-height:5px;">0</div>
<div class="t" style="left:475.37px;top:326px;font-size:4.70px;color:#5f6368;line-height:5px;">7</div>
<div class="t" style="left:495.50px;top:326px;font-size:4.70px;color:#5f6368;line-height:5px;">14</div>
<div class="t" style="left:516.93px;top:326px;font-size:4.70px;color:#5f6368;line-height:5px;">21</div>
<div class="t" style="left:538.36px;top:326px;font-size:4.70px;color:#5f6368;line-height:5px;">28</div>
<div class="t" style="left:559.79px;top:326px;font-size:4.70px;color:#5f6368;line-height:5px;">35</div>
<div class="t" style="left:581.22px;top:326px;font-size:4.70px;color:#5f6368;line-height:5px;">42</div>
<div class="t" style="left:602.65px;top:326px;font-size:4.70px;color:#5f6368;line-height:5px;">49</div>
<div class="t" style="left:624.08px;top:326px;font-size:4.70px;color:#5f6368;line-height:5px;">56</div>
<div class="t" style="left:478.00px;top:349px;font-size:5.30px;color:#555;line-height:6px;letter-spacing:0.149px;">Standard deviation of the voltage with time change</div>
<div class="a" style="left:895.40px;top:43.40px;width:64.60px;height:487.60px;background:#fff;"></div>
<div class="a" style="left:960.00px;top:43.40px;width:64.00px;height:487.60px;background:#fff;"></div>
<div class="a" style="left:959.90px;top:43.40px;width:0.60px;height:487.60px;background:#e3e5e8;"></div>
<div class="a" style="left:895.50px;top:64.20px;width:128.50px;height:0.60px;background:#e3e5e8;"></div>
<div class="a" style="left:895.60px;top:508.00px;width:0.60px;height:23.00px;background:#e3e5e8;"></div>
<div class="a" style="left:956.90px;top:79.20px;width:2.60px;height:451.80px;background:#f4f4f4;"></div>
<div class="a" style="left:957.00px;top:79.20px;width:2.40px;height:324.00px;background:#a3a3a3;"></div>
<div class="a" style="left:900.20px;top:46.20px;width:19.60px;height:15.00px;background:#fff;border:0.5px solid #eff1f3;border-radius:1px"></div>
<svg style="left:0.00px;top:0.00px" width="1024" height="531" viewBox="0 0 1024 531"><path d="M902.2 58.8 L903.6 58.4 L906.5 56 L907.6 56.6 L909.6 55.1 L911 56.4 L912.8 53.5 L915 55.3 L918.2 50.7" fill="none" stroke="#5b93f5" stroke-width="1.05" stroke-linejoin="round" stroke-linecap="round"/></svg>
<div class="t" style="left:922.00px;top:50px;font-size:6.60px;color:#2c2f33;line-height:7px;letter-spacing:0.252px;-webkit-text-stroke:0.1px #2c2f33;">Chart</div>
<svg style="left:951.00px;top:51.60px" width="6.4" height="4" viewBox="0 0 6.4 4"><path d="M0.5 0.5 L3.2 3.2 L5.9 0.5" fill="none" stroke="#6c7075" stroke-width="1.05"/></svg>
<div class="t" style="left:904.20px;top:70px;font-size:4.90px;color:#3367d6;line-height:5px;transform:scaleX(0.9671);">SETUP</div>
<div class="t" style="left:936.60px;top:70px;font-size:4.90px;color:#6b6f74;line-height:5px;transform:scaleX(0.9663);">STYLE</div>
<div class="a" style="left:896.20px;top:78.20px;width:31.80px;height:1.10px;background:#4a80e8;"></div>
<div class="a" style="left:928.00px;top:78.80px;width:29.00px;height:0.50px;background:#e3e5e8;"></div>
<div class="t" style="left:898.20px;top:86px;font-size:4.90px;color:#82868b;line-height:5px;transform:scaleX(0.8857);">Data source</div>
<div class="a" style="left:898.20px;top:94.70px;width:56.60px;height:8.00px;background:#e4dfdb;"></div>
<div class="a" style="left:898.20px;top:94.70px;width:9.90px;height:8.00px;background:#dcd6d1;"></div>
<div class="a" style="left:908.10px;top:94.70px;width:0.60px;height:8.00px;background:#fff;opacity:.6"></div>
<svg style="left:900.60px;top:96.20px" width="5" height="5" viewBox="0 0 5 5"><path d="M0.3 4.7 L0.6 3.3 L3.6 0.3 L4.7 1.4 L1.7 4.4 Z" fill="#3c4043"/></svg>
<div class="t" style="left:911.00px;top:96px;font-size:5.30px;color:#3c4043;line-height:6px;transform:scaleX(0.8094);">TDengine</div>
<svg style="left:899.75px;top:106.05px" width="6.5" height="6.5" viewBox="0 0 6.5 6.5"><circle cx="3.25" cy="3.25" r="3.25" fill="#3f83f3"/><path d="M3.25 1.55 V4.95 M1.55 3.25 H4.95" stroke="#fff" stroke-width="0.85"/></svg>
<div class="t" style="left:909.60px;top:107px;font-size:4.90px;color:#1a73e8;line-height:5px;transform:scaleX(0.8455);-webkit-text-stroke:0.08px #1a73e8;">BLEND DATA</div>
<svg style="left:948.30px;top:106.40px" width="5.8" height="5.8" viewBox="0 0 5.8 5.8"><circle cx="2.9" cy="2.9" r="2.5" fill="none" stroke="#7d8186" stroke-width="0.55"/><path d="M2.1 2.4 C2.1 1.3 3.7 1.3 3.7 2.4 C3.7 3 2.9 3 2.9 3.6" fill="none" stroke="#7d8186" stroke-width="0.5"/><circle cx="2.9" cy="4.3" r="0.3" fill="#7d8186"/></svg>
<div class="a" style="left:896.20px;top:122.00px;width:60.60px;height:0.60px;background:#e6e8ea;"></div>
<div class="t" style="left:898.20px;top:129px;font-size:4.90px;color:#82868b;line-height:5px;transform:scaleX(0.9245);">Dimension</div>
<div class="a" style="left:898.20px;top:139.20px;width:56.60px;height:8.40px;background:#c8e6c9;"></div>
<div class="a" style="left:898.20px;top:139.20px;width:9.90px;height:8.40px;background:#bcdcbd;"></div>
<div class="a" style="left:908.10px;top:139.20px;width:0.60px;height:8.40px;background:#fff;opacity:.55"></div>
<div class="t" style="left:911.00px;top:140px;font-size:5.30px;color:#3c4043;line-height:6px;transform:scaleX(0.8629);">ts (Minute)</div>
<svg style="left:900.80px;top:140.80px" width="5" height="5.4" viewBox="0 0 5 5.4"><rect x="0.4" y="0.8" width="4.2" height="4.2" fill="none" stroke="#3c4043" stroke-width="0.65"/><rect x="0.4" y="0.6" width="4.2" height="1.2" fill="#3c4043"/><rect x="2.3" y="2.8" width="1.5" height="1.4" fill="#3c4043"/></svg>
<div class="a" style="left:898.20px;top:150.20px;width:56.60px;height:8.50px;background:#fff;border:0.55px dotted #c4c7cb"></div>
<svg style="left:900.25px;top:151.25px" width="6.5" height="6.5" viewBox="0 0 6.5 6.5"><circle cx="3.25" cy="3.25" r="3.25" fill="#3f83f3"/><path d="M3.25 1.55 V4.95 M1.55 3.25 H4.95" stroke="#fff" stroke-width="0.85"/></svg>
<div class="t" style="left:911.00px;top:151px;font-size:5.10px;color:#6b6f74;line-height:6px;transform:scaleX(0.8774);">Add dimension</div>
<div class="t" style="left:898.20px;top:166px;font-size:4.90px;color:#82868b;line-height:5px;transform:scaleX(0.9204);">Drill down</div>
<div class="a" style="left:939.40px;top:166.80px;width:9.80px;height:4.20px;background:#a6c5f9;border-radius:2.1px"></div>
<div class="a" style="left:943.60px;top:165.60px;width:6.80px;height:6.80px;background:#4285f4;border-radius:50%"></div>
<div class="t" style="left:898.20px;top:177px;font-size:3.50px;color:#9aa0a6;line-height:4px;transform:scaleX(0.9538);">Default drill down level</div>
<div class="t" style="left:898.20px;top:183px;font-size:4.90px;color:#9da1a6;line-height:5px;transform:scaleX(0.9247);">ts (Minute)</div>
<svg style="left:949.40px;top:184.40px" width="2.4" height="1.4" viewBox="0 0 2.4 1.4"><path d="M0 0 H2.4 L1.2 1.4 Z" fill="#5f6368"/></svg>
<div class="a" style="left:898.50px;top:190.00px;width:56.00px;height:0.60px;background:#e6e8ea;"></div>
<div class="t" style="left:898.20px;top:195px;font-size:4.90px;color:#82868b;line-height:5px;transform:scaleX(0.8241);">Breakdown Dimension</div>
<div class="a" style="left:898.20px;top:203.10px;width:56.60px;height:8.40px;background:#c8e6c9;"></div>
<div class="a" style="left:898.20px;top:203.10px;width:9.90px;height:8.40px;background:#bcdcbd;"></div>
<div class="a" style="left:908.10px;top:203.10px;width:0.60px;height:8.40px;background:#fff;opacity:.55"></div>
<div class="t" style="left:900.40px;top:206px;font-size:3.10px;color:#3c4043;line-height:4px;letter-spacing:0.343px;font-weight:bold;">123</div>
<div class="t" style="left:911.00px;top:204px;font-size:5.30px;color:#3c4043;line-height:6px;transform:scaleX(0.8484);">groupid</div>
<div class="a" style="left:896.20px;top:221.00px;width:60.60px;height:0.60px;background:#e6e8ea;"></div>
<div class="t" style="left:898.20px;top:228px;font-size:4.90px;color:#82868b;line-height:5px;transform:scaleX(0.9596);">Metric</div>
<div class="a" style="left:898.20px;top:238.20px;width:56.60px;height:8.60px;background:#bbdefb;"></div>
<div class="a" style="left:898.20px;top:238.20px;width:9.90px;height:8.60px;background:#afd4f6;"></div>
<div class="a" style="left:908.10px;top:238.20px;width:0.60px;height:8.60px;background:#fff;opacity:.55"></div>
<div class="t" style="left:900.40px;top:241px;font-size:3.10px;color:#3c4043;line-height:4px;font-weight:bold;">STD</div>
<div class="t" style="left:911.00px;top:239px;font-size:5.30px;color:#3c4043;line-height:6px;transform:scaleX(0.8310);">phase</div>
<div class="t" style="left:898.20px;top:254px;font-size:4.90px;color:#82868b;line-height:5px;transform:scaleX(0.9265);">Optional metrics</div>
<div class="a" style="left:940.00px;top:255.20px;width:9.60px;height:3.60px;background:#8e9297;border-radius:1.8px"></div>
<div class="a" style="left:938.70px;top:253.70px;width:6.60px;height:6.60px;background:#fff;border-radius:50%;box-shadow:0 0.3px 1px rgba(0,0,0,.45)"></div>
<div class="t" style="left:898.20px;top:268px;font-size:4.90px;color:#82868b;line-height:5px;transform:scaleX(0.9494);">Metric sliders</div>
<div class="a" style="left:940.00px;top:268.80px;width:9.60px;height:3.60px;background:#8e9297;border-radius:1.8px"></div>
<div class="a" style="left:938.70px;top:267.30px;width:6.60px;height:6.60px;background:#fff;border-radius:50%;box-shadow:0 0.3px 1px rgba(0,0,0,.45)"></div>
<div class="a" style="left:896.20px;top:283.10px;width:60.60px;height:0.60px;background:#e6e8ea;"></div>
<div class="t" style="left:898.20px;top:291px;font-size:4.90px;color:#82868b;line-height:5px;transform:scaleX(0.9144);">Breakdown dimension sort</div>
<div class="a" style="left:898.20px;top:300.60px;width:56.60px;height:8.40px;background:#bbdefb;"></div>
<div class="a" style="left:898.20px;top:300.60px;width:9.90px;height:8.40px;background:#afd4f6;"></div>
<div class="a" style="left:908.10px;top:300.60px;width:0.60px;height:8.40px;background:#fff;opacity:.55"></div>
<div class="t" style="left:900.40px;top:303px;font-size:3.10px;color:#3c4043;line-height:4px;transform:scaleX(0.9557);font-weight:bold;">AVG</div>
<div class="t" style="left:911.00px;top:302px;font-size:5.30px;color:#3c4043;line-height:6px;transform:scaleX(0.8310);">phase</div>
<svg style="left:898.30px;top:315.90px" width="8" height="8" viewBox="0 0 8 8"><circle cx="4" cy="4" r="3.5" fill="#fff" stroke="#3b7de9" stroke-width="0.8"/><circle cx="4" cy="4" r="1.9" fill="#3b7de9"/></svg>
<div class="t" style="left:910.50px;top:317px;font-size:5.20px;color:#a6aaae;line-height:6px;transform:scaleX(0.8411);">Descending</div>
<svg style="left:898.30px;top:332.10px" width="8" height="8" viewBox="0 0 8 8"><circle cx="4" cy="4" r="3.5" fill="#fff" stroke="#5f6368" stroke-width="0.8"/></svg>
<div class="t" style="left:910.50px;top:333px;font-size:5.20px;color:#a6aaae;line-height:6px;transform:scaleX(0.8442);">Ascending</div>
<div class="a" style="left:896.20px;top:349.70px;width:60.60px;height:0.60px;background:#e6e8ea;"></div>
<div class="t" style="left:898.20px;top:357px;font-size:4.90px;color:#55595e;line-height:5px;transform:scaleX(0.9028);">Default date range</div>
<svg style="left:898.30px;top:367.90px" width="8" height="8" viewBox="0 0 8 8"><circle cx="4" cy="4" r="3.5" fill="#fff" stroke="#3b7de9" stroke-width="0.8"/><circle cx="4" cy="4" r="1.9" fill="#3b7de9"/></svg>
<div class="t" style="left:910.50px;top:369px;font-size:5.20px;color:#a6aaae;line-height:6px;transform:scaleX(0.8507);">Auto</div>
<svg style="left:898.30px;top:383.80px" width="8" height="8" viewBox="0 0 8 8"><circle cx="4" cy="4" r="3.5" fill="#fff" stroke="#5f6368" stroke-width="0.8"/></svg>
<div class="t" style="left:910.50px;top:385px;font-size:5.20px;color:#a6aaae;line-height:6px;transform:scaleX(0.8428);">Custom</div>
<div class="t" style="left:898.20px;top:401px;font-size:4.90px;color:#a6aaae;line-height:5px;transform:scaleX(0.8109);">Last 28 days (exclude today)</div>
<div class="t" style="left:898.20px;top:408px;font-size:4.90px;color:#55595e;line-height:5px;transform:scaleX(0.8163);">Comparison date range</div>
<svg style="left:899.00px;top:417.60px" width="8.4" height="5.4" viewBox="0 0 8.4 5.4"><path d="M0.2 3.7 H4 M2.9 2.7 L4 3.7 L2.9 4.7 M3.6 1.5 H7.8 M4.7 0.5 L3.6 1.5 L4.7 2.5" fill="none" stroke="#3c4043" stroke-width="0.8"/></svg>
<div class="t" style="left:910.50px;top:416px;font-size:5.00px;color:#a6aaae;line-height:6px;transform:scaleX(0.8450);">None</div>
<svg style="left:946.00px;top:417.90px" width="2.4" height="1.4" viewBox="0 0 2.4 1.4"><path d="M0 0 H2.4 L1.2 1.4 Z" fill="#3c4043"/></svg>
<div class="a" style="left:910.50px;top:424.20px;width:40.50px;height:0.60px;background:#e6e8ea;"></div>
<div class="a" style="left:896.20px;top:433.30px;width:60.60px;height:0.60px;background:#e6e8ea;"></div>
<div class="t" style="left:898.20px;top:441px;font-size:4.90px;color:#3c4043;line-height:5px;transform:scaleX(0.9551);-webkit-text-stroke:0.06px #3c4043;">Filter</div>
<div class="t" style="left:898.20px;top:449px;font-size:4.90px;color:#55595e;line-height:5px;transform:scaleX(0.8323);">Time Series Filter</div>
<svg style="left:899.75px;top:457.35px" width="6.5" height="6.5" viewBox="0 0 6.5 6.5"><circle cx="3.25" cy="3.25" r="3.25" fill="#3f83f3"/><path d="M3.25 1.55 V4.95 M1.55 3.25 H4.95" stroke="#fff" stroke-width="0.85"/></svg>
<div class="t" style="left:909.60px;top:458px;font-size:4.90px;color:#1a73e8;line-height:5px;transform:scaleX(0.8480);-webkit-text-stroke:0.08px #1a73e8;">ADD A FILTER</div>
<div class="a" style="left:896.20px;top:473.30px;width:60.60px;height:0.60px;background:#e6e8ea;"></div>
<div class="t" style="left:898.20px;top:481px;font-size:4.90px;color:#55595e;line-height:5px;transform:scaleX(0.9323);">Chart interactions</div>
<div class="t" style="left:898.20px;top:492px;font-size:4.90px;color:#a6aaae;line-height:5px;transform:scaleX(0.9066);">Cross-filtering</div>
<div class="a" style="left:939.40px;top:492.40px;width:9.80px;height:4.20px;background:#a6c5f9;border-radius:2.1px"></div>
<div class="a" style="left:943.60px;top:491.20px;width:6.80px;height:6.80px;background:#4285f4;border-radius:50%"></div>
<svg style="left:0;top:0" width="1024" height="531"><rect x="894.7" y="42.5" width="65" height="465.6" rx="1.4" fill="none" stroke="#f73a30" stroke-width="1.5"/></svg>
<svg style="left:965.00px;top:49.60px" width="8.4" height="8.2" viewBox="0 0 8.4 8.2"><rect x="0.5" y="0.5" width="7.4" height="7.2" rx="0.6" fill="#c4c6c8" stroke="#55595e" stroke-width="0.9"/><path d="M0.5 2.9 H7.9 M0.5 5.3 H7.9" stroke="#55595e" stroke-width="0.85"/></svg>
<div class="t" style="left:977.00px;top:50px;font-size:6.60px;color:#2c2f33;line-height:7px;letter-spacing:0.065px;-webkit-text-stroke:0.1px #2c2f33;">Data</div>
<div class="a" style="left:962.40px;top:67.90px;width:59.00px;height:10.70px;background:#f3f4f5;border-radius:2.2px"></div>
<svg style="left:965.00px;top:70.80px" width="5.4" height="5.4" viewBox="0 0 5.4 5.4"><circle cx="2.1" cy="2.1" r="1.65" fill="none" stroke="#4d5156" stroke-width="0.7"/><path d="M3.3 3.3 L5.1 5.1" stroke="#4d5156" stroke-width="0.8"/></svg>
<div class="t" style="left:972.80px;top:71px;font-size:4.90px;color:#80868b;line-height:5px;transform:scaleX(0.9404);">Search</div>
<div class="a" style="left:964.00px;top:87.00px;width:6.60px;height:6.40px;background:#5c85bd;border-radius:0.6px"></div>
<div class="a" style="left:966.20px;top:89.20px;width:2.20px;height:2.20px;background:#fff;border-radius:0.3px"></div>
<div class="t" style="left:973.00px;top:87px;font-size:5.10px;color:#3c4043;line-height:6px;transform:scaleX(0.8863);">TDengine</div>
<svg style="left:1016.00px;top:87.40px" width="4.2" height="6" viewBox="0 0 4.2 6"><path d="M0.5 0.4 H3.7 M0.6 1.7 L2.1 3 L3.6 1.7 M0.6 5.4 L2.1 4.1 L3.6 5.4" fill="none" stroke="#5f6368" stroke-width="0.7"/></svg>
<div class="a" style="left:962.50px;top:97.10px;width:59.50px;height:0.60px;background:#e6e8ea;"></div>
<div class="t" style="left:965.00px;top:101px;font-size:3.50px;color:#5fbd78;line-height:4px;letter-spacing:0.187px;font-weight:bold;">123</div>
<div class="t" style="left:976.00px;top:99px;font-size:5.20px;color:#3c4043;line-height:6px;transform:scaleX(0.8650);">current</div>
<div class="t" style="left:965.00px;top:109px;font-size:3.50px;color:#5fbd78;line-height:4px;letter-spacing:0.187px;font-weight:bold;">123</div>
<div class="t" style="left:976.00px;top:108px;font-size:5.20px;color:#3c4043;line-height:6px;transform:scaleX(0.8647);">groupid</div>
<div class="t" style="left:965.00px;top:118px;font-size:3.50px;color:#5fbd78;line-height:4px;transform:scaleX(0.8440);font-weight:bold;">ABC</div>
<div class="t" style="left:976.00px;top:117px;font-size:5.20px;color:#3c4043;line-height:6px;transform:scaleX(0.8704);">location</div>
<div class="t" style="left:965.00px;top:127px;font-size:3.50px;color:#5fbd78;line-height:4px;letter-spacing:0.187px;font-weight:bold;">123</div>
<div class="t" style="left:976.00px;top:126px;font-size:5.20px;color:#3c4043;line-height:6px;transform:scaleX(0.8187);">phase</div>
<svg style="left:965.40px;top:134.46px" width="5.4" height="5.8" viewBox="0 0 5.4 5.8"><rect x="0.4" y="0.8" width="4.6" height="4.6" rx="0.5" fill="none" stroke="#5fbd78" stroke-width="0.55"/><rect x="0.4" y="0.5" width="4.6" height="1.3" fill="#5fbd78"/><rect x="2.6" y="3" width="1.5" height="1.4" fill="#5fbd78"/></svg>
<div class="t" style="left:976.00px;top:134px;font-size:5.20px;color:#3c4043;line-height:6px;transform:scaleX(0.8901);">ts</div>
<div class="t" style="left:965.00px;top:145px;font-size:3.50px;color:#5fbd78;line-height:4px;letter-spacing:0.187px;font-weight:bold;">123</div>
<div class="t" style="left:976.00px;top:143px;font-size:5.20px;color:#3c4043;line-height:6px;transform:scaleX(0.8468);">voltage</div>
<svg style="left:964.75px;top:154.05px" width="6.5" height="6.5" viewBox="0 0 6.5 6.5"><circle cx="3.25" cy="3.25" r="3.25" fill="#3f83f3"/><path d="M3.25 1.55 V4.95 M1.55 3.25 H4.95" stroke="#fff" stroke-width="0.85"/></svg>
<div class="t" style="left:976.00px;top:154px;font-size:5.00px;color:#1a73e8;line-height:6px;transform:scaleX(0.9565);">Add a field</div>
<svg style="left:964.75px;top:163.95px" width="6.5" height="6.5" viewBox="0 0 6.5 6.5"><circle cx="3.25" cy="3.25" r="3.25" fill="#3f83f3"/><path d="M3.25 1.55 V4.95 M1.55 3.25 H4.95" stroke="#fff" stroke-width="0.85"/></svg>
<div class="t" style="left:976.00px;top:164px;font-size:5.00px;color:#1a73e8;line-height:6px;transform:scaleX(0.9559);">Add a parameter</div>
<div class="a" style="left:962.50px;top:173.00px;width:59.50px;height:0.60px;background:#e6e8ea;"></div>
<div class="a" style="left:960.40px;top:515.90px;width:63.60px;height:0.60px;background:#e6e8ea;"></div>
<svg style="left:963.35px;top:521.05px" width="6.5" height="6.5" viewBox="0 0 6.5 6.5"><circle cx="3.25" cy="3.25" r="3.25" fill="#3f83f3"/><path d="M3.25 1.55 V4.95 M1.55 3.25 H4.95" stroke="#fff" stroke-width="0.85"/></svg>
<div class="t" style="left:975.00px;top:522px;font-size:4.90px;color:#1a73e8;line-height:5px;transform:scaleX(0.9887);">Add Data</div>
</div>
</body>
</html>
